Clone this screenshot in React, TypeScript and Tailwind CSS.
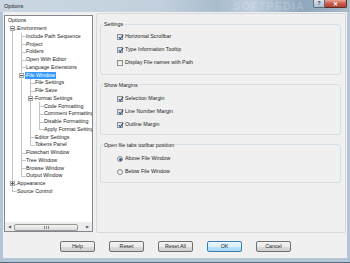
import type { ReactNode } from 'react';

interface TreeNode {
  label: string;
  children?: TreeNode[];
  collapsed?: boolean;
  selected?: boolean;
}

interface TreeRow {
  label: string;
  depth: number;
  guides: boolean[];
  last: boolean;
  expander: 'plus' | 'minus' | null;
  selected: boolean;
}

const leaf = (label: string): TreeNode => ({ label });

const optionsTree: TreeNode = {
  label: 'Options',
  children: [
    {
      label: 'Environment',
      children: [
        leaf('Include Path Sequence'),
        leaf('Project'),
        leaf('Folders'),
        leaf('Open With Editor'),
        leaf('Language Extensions'),
        {
          label: 'File Window',
          selected: true,
          children: [
            leaf('File Settings'),
            leaf('File Save'),
            {
              label: 'Format Settings',
              children: [
                leaf('Code Formatting'),
                leaf('Comment Formatting'),
                leaf('Disable Formatting'),
                leaf('Apply Format Settings'),
              ],
            },
            leaf('Editor Settings'),
            leaf('Tokens Panel'),
          ],
        },
        leaf('Flowchart Window'),
        leaf('Tree Window'),
        leaf('Browse Window'),
        leaf('Output Window'),
      ],
    },
    { label: 'Appearance', collapsed: true, children: [leaf('Colors')] },
    leaf('Source Control'),
  ],
};

function flatten(node: TreeNode, depth: number, guides: boolean[], last: boolean, out: TreeRow[]) {
  out.push({
    label: node.label,
    depth,
    guides,
    last,
    expander: node.children ? (node.collapsed ? 'plus' : 'minus') : null,
    selected: !!node.selected,
  });
  if (node.children && !node.collapsed) {
    const next = depth === 0 ? [] : [...guides, !last];
    node.children.forEach((c, i) => flatten(c, depth + 1, next, i === node.children!.length - 1, out));
  }
}

const rows: TreeRow[] = [];
flatten(optionsTree, 0, [], true, rows);

function TreeLine({ row }: { row: TreeRow }) {
  return (
    <div className="flex h-[7.75px] items-center">
      {row.guides.map((g, i) => (
        <div key={i} className="relative h-full w-[9px] shrink-0">
          {g && <span className="absolute bottom-0 left-[4px] top-0 w-px bg-[#c4c4c4]" />}
        </div>
      ))}
      {row.depth > 0 && (
        <div className="relative h-full w-[9px] shrink-0">
          <span className={`absolute left-[4px] top-0 w-px bg-[#c4c4c4] ${row.last ? 'h-1/2' : 'bottom-0'}`} />
          <span className="absolute left-[4px] right-0 top-1/2 h-px bg-[#c4c4c4]" />
          {row.expander && (
            <span className="absolute left-[2px] top-[1.5px] flex h-[5px] w-[5px] items-center justify-center border border-[#a6a6a6] bg-[linear-gradient(#ffffff,#dedede)]">
              <span className="absolute h-px w-[3px] bg-[#5a5a5a]" />
              {row.expander === 'plus' && <span className="absolute h-[3px] w-px bg-[#5a5a5a]" />}
            </span>
          )}
        </div>
      )}
      <span
        className={`-ml-px whitespace-nowrap px-px leading-[7px] ${
          row.selected ? 'bg-[#3399ff] text-white' : 'text-[#1c1c1c]'
        }`}
      >
        {row.label}
      </span>
    </div>
  );
}

function CheckBox({ checked }: { checked: boolean }) {
  return (
    <span className="relative flex h-[6px] w-[6px] shrink-0 items-center justify-center border border-[#8e8f8f] bg-[linear-gradient(#dcdcdc,#ffffff)]">
      {checked && (
        <svg width="6" height="6" viewBox="0 0 6 6" className="absolute -top-px left-0">
          <path d="M0.8 3.2 L2.3 4.8 L5.2 0.9" fill="none" stroke="#2b4a8a" strokeWidth="1.1" />
        </svg>
      )}
    </span>
  );
}

function Radio({ checked }: { checked: boolean }) {
  return (
    <span className="flex h-[6px] w-[6px] shrink-0 items-center justify-center rounded-full border border-[#8e8f8f] bg-[linear-gradient(#dcdcdc,#ffffff)]">
      {checked && <span className="h-[3px] w-[3px] rounded-full bg-[#2c5b9c]" />}
    </span>
  );
}

function Group({ title, className, children }: { title: string; className: string; children: ReactNode }) {
  return (
    <fieldset className={`ml-[3px] mr-[4px] rounded-[3px] border border-[#d5dfe5] ${className}`}>
      <legend className="ml-[2px] px-px leading-[8px] text-[#1c1c1c]">{title}</legend>
      {children}
    </fieldset>
  );
}

function Option({ label, checked, radio, h }: { label: string; checked: boolean; radio?: boolean; h: string }) {
  return (
    <div className={`flex items-center gap-px pl-[16px] ${h}`}>
      {radio ? <Radio checked={checked} /> : <CheckBox checked={checked} />}
      <span className="ml-px text-[#1c1c1c]">{label}</span>
    </div>
  );
}

function DlgButton({ label, primary }: { label: string; primary?: boolean }) {
  return (
    <button
      className={`h-[11px] w-[35px] rounded-[2px] border leading-none text-[#1c1c1c] ${
        primary
          ? 'border-[#3c7fb1] bg-[linear-gradient(#eaf6fd,#d9f0fc_50%,#bee6fd_50%,#a7d9f5)]'
          : 'border-[#707070] bg-[linear-gradient(#f2f2f2,#ebebeb_50%,#dddddd_50%,#cfcfcf)]'
      }`}
    >
      {label}
    </button>
  );
}

export default function App() {
  return (
    <div className="flex h-[263px] w-[350px] flex-col overflow-hidden border-b border-[#56697d] bg-[#b4c5d6] font-['Liberation_Sans',Arial,sans-serif] text-[5.3px]">
      {/* Title bar */}
      <div className="flex h-[12px] shrink-0 items-start bg-[linear-gradient(90deg,#cad7e3_0%,#c3d1de_45%,#a9bccd_62%,#bfcfdd_72%,#8fa6bc_86%,#a8b9c9_100%)]">
        <span className="ml-[4px] mt-[2px] text-[5.6px] text-[#1a1a1a]">Options</span>
        <span className="ml-auto mr-[8px] mt-[1px] text-[11px] font-bold leading-none tracking-[1px] text-white/20">SOFTPEDIA</span>
        <div className="mr-[3px] flex">
          <span className="flex h-[8px] w-[12px] items-center justify-center rounded-bl-[2px] border border-t-0 border-[#5d6e80] bg-[linear-gradient(#dbe4ee,#aebfd0)] text-[5px] font-bold leading-none text-[#2a3644]">
            ?
          </span>
          <span className="flex h-[8px] w-[22px] items-center justify-center rounded-br-[2px] border border-l-0 border-t-0 border-[#5b2a2a] bg-[linear-gradient(#e8a493,#c75a4a_50%,#b8412f)] text-[6px] font-bold leading-none text-white">
            ✕
          </span>
        </div>
      </div>

      {/* Client */}
      <div className="flex flex-1 flex-col px-[3px] pb-[4px]">
        <div className="flex flex-1 flex-col bg-[#f0f0f0]">
          <div className="flex h-[221px] items-start">
            {/* Tree */}
            <div className="ml-px mt-[3px] flex h-[217px] w-[89px] flex-col overflow-hidden border border-[#828790] bg-white">
              <div className="pl-[3px] pt-px">
                {rows.map((r) => (
                  <TreeLine key={r.label} row={r} />
                ))}
              </div>
              <div className="flex-1" />
              <div className="flex h-[9px] items-center border-t border-[#f0f0f0] bg-[#ececec] px-[1px]">
                <span className="flex w-[7px] justify-center text-[4px] leading-none text-[#606060]">◀</span>
                <span className="ml-[1px] flex h-[7px] w-[64px] items-center justify-center rounded-[2px] border border-[#999999] bg-[linear-gradient(#f4f4f4,#dcdcdc)]">
                  <span className="h-[3px] w-[5px] border-x border-[#8a8a8a]">
                    <span className="mx-auto block h-full w-px bg-[#8a8a8a]" />
                  </span>
                </span>
                <span className="ml-auto flex w-[7px] justify-center text-[4px] leading-none text-[#606060]">▶</span>
              </div>
            </div>

            {/* Settings panel */}
            <div className="ml-[3px] mr-px mt-px flex h-[220px] flex-1 flex-col rounded-[2px] border border-[#d9d9d9]">
              <Group title="Settings" className="mt-[6px] pb-[4px] pt-[2px]">
                <Option label="Horizontal Scrollbar" checked h="h-[13.33px]" />
                <Option label="Type Information Tooltip" checked h="h-[13.33px]" />
                <Option label="Display File names with Path" checked={false} h="h-[13.33px]" />
              </Group>
              <Group title="Show Margins" className="mt-[6px] pb-[2px] pt-[3px]">
                <Option label="Selection Margin" checked h="h-[13.33px]" />
                <Option label="Line Number Margin" checked h="h-[13.33px]" />
                <Option label="Outline Margin" checked h="h-[13.33px]" />
              </Group>
              <Group title="Open file tabs toolbar position" className="mt-[6px] pb-[4px] pt-[4px]">
                <Option label="Above File Window" checked radio h="h-[12.5px]" />
                <Option label="Below File Window" checked={false} radio h="h-[12.5px]" />
              </Group>
            </div>
          </div>

          {/* Buttons */}
          <div className="mt-[8px] flex gap-[14px] pl-[57px]">
            <DlgButton label="Help" />
            <DlgButton label="Reset" />
            <DlgButton label="Reset All" />
            <DlgButton label="OK" primary />
            <DlgButton label="Cancel" />
          </div>
        </div>
      </div>
    </div>
  );
}
